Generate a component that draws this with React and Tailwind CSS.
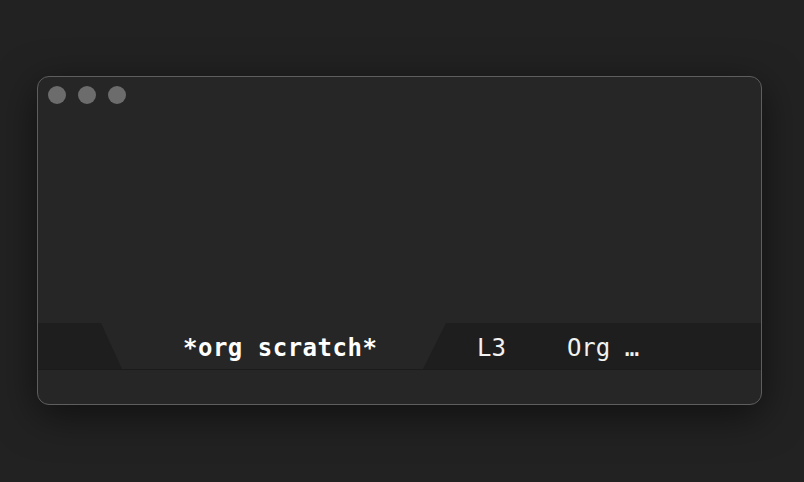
const dots = [0, 1, 2];

const App = () => {
  return (
    <div className="min-h-screen w-full bg-[#222222] pt-[76px] pl-[37px]">
      <div className="w-[725px] h-[329px] rounded-[12px] border border-[#5e5e5e] bg-[#262626] shadow-[0_10px_40px_rgba(0,0,0,0.55)] overflow-hidden flex flex-col">
        <div className="flex gap-[12px] pl-[10px] pt-[9px] h-[246px]">
          {dots.map((d) => (
            <span key={d} className="w-[18px] h-[18px] rounded-full bg-[#6c6c6c]" />
          ))}
        </div>

        <div
          className="flex items-stretch h-[47px] bg-[#1e1e1e] border-b border-[#1b1b1b]"
          style={{ fontFamily: '"DejaVu Sans Mono", "Liberation Mono", monospace' }}
        >
          <div className="ml-[63px] w-[345px] bg-[#262626] [clip-path:polygon(0_0,100%_0,calc(100%-23px)_100%,21px_100%)] flex items-center pl-[82px] pt-[4px]">
            <span className="text-[24px] font-bold tracking-[0.5px] text-white leading-none">*org scratch*</span>
          </div>
          <div className="flex items-center pl-[31px] pt-[4px] text-[24px] text-[#f2f2f2] leading-none">
            <span>L3</span>
            <span className="ml-[61px]">Org …</span>
          </div>
        </div>

        <div className="flex-1" />
      </div>
    </div>
  );
};

export default App;
